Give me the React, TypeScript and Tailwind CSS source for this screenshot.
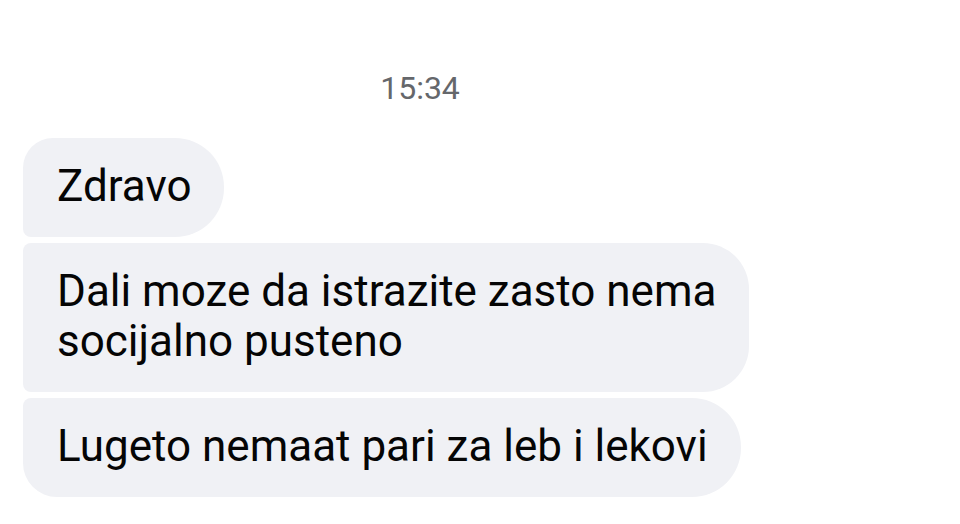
export default function App() {
  return (
    <div
      className="w-[960px] h-[524px] bg-white overflow-hidden pt-[70px]"
      style={{ fontFamily: "Roboto, 'Noto Sans', sans-serif" }}
    >
      <div className="w-[840px] text-center text-[32px] leading-[36px] text-[#65676b]">
        15:34
      </div>
      <div className="mt-[32px] pl-[23px] flex flex-col items-start gap-[6px] text-[44px] leading-[50px] text-[#050505]">
        <div className="bg-[#f0f1f5] pt-[23px] pb-[26px] pl-[34px] pr-[33px] rounded-tl-[30px] rounded-tr-[49px] rounded-br-[49px] rounded-bl-[8px]">
          Zdravo
        </div>
        <div className="bg-[#f0f1f5] pt-[23px] pb-[26px] pl-[34px] pr-[33px] rounded-tl-[8px] rounded-bl-[8px] rounded-tr-[46px] rounded-br-[46px]">
          Dali moze da istrazite zasto nema
          <br />
          socijalno pusteno
        </div>
        <div className="bg-[#f0f1f5] pt-[23px] pb-[26px] pl-[34px] pr-[33px] rounded-tl-[8px] rounded-bl-[34px] rounded-tr-[49px] rounded-br-[49px]">
          Lugeto nemaat pari za leb i lekovi
        </div>
      </div>
    </div>
  );
}
